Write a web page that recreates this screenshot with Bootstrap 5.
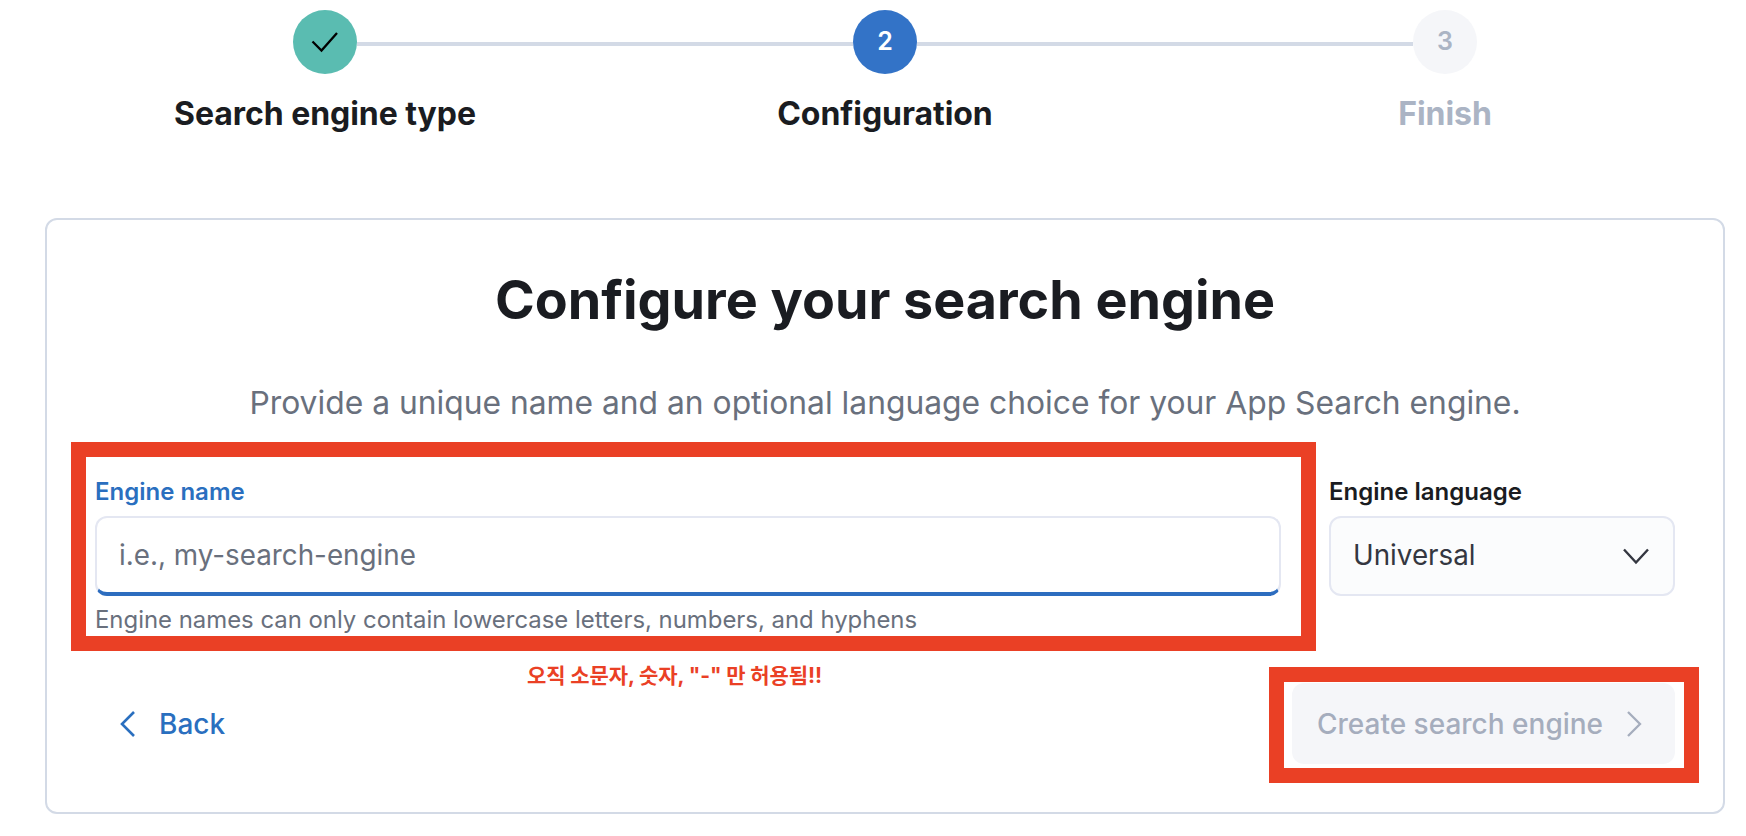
<!DOCTYPE html>
<html lang="en">
<head>
<meta charset="utf-8">
<title>Configure your search engine</title>
<link rel="stylesheet" href="https://cdn.jsdelivr.net/npm/bootstrap@5.3.0/dist/css/bootstrap.min.css">
<style>
html,body{height:100%}
body{background:#fff;font-family:Inter,"Noto Sans CJK KR",sans-serif;color:#1a1c21;overflow:hidden}
.page-wrap{padding:10px 21px 0 45px}
.step-col{width:560px}
.step-line{height:4px;margin-top:4px;background:#d3dae6}
.step-line.blank{background:transparent}
.step-dot{width:64px;height:64px;font-size:25px;font-weight:600}
.dot-done{background:#5abcb1;color:#000}
.dot-now{background:#3373c7;color:#fff}
.dot-todo{background:#f5f6f9;color:#abb4c4}
.step-name{font-size:32px;line-height:40px;font-weight:700;margin-top:20px;letter-spacing:-.05px}
.name-todo{color:#abb4c4}
.main-panel{margin-top:84px;height:596px;border:2px solid #d3dae6;border-radius:12px;padding:0 24px 0 24px}
.panel-title{font-size:53.8px;line-height:68px;font-weight:700;margin:46px 0 0;color:#1a1c21}
.panel-sub{font-size:31.8px;line-height:40px;color:#69707d;margin:49px 0 0;white-space:nowrap}
.name-mark{border:15px solid #ea4025;width:1245px;height:209px;padding:21px 20px 0 9px}
.field-row{margin-top:19px}
.lang-field{width:346px;margin-left:13px;padding-top:36px}
.field-label{font-size:24px;line-height:28px;font-weight:600;margin-bottom:10px;display:block}
.label-on{color:#2a6fbf}
.name-input.form-control,.lang-select.form-select{height:80px;border:2px solid #e4e7f2;border-radius:12px;font-size:27.8px;color:#343741;box-shadow:none}
.name-input.form-control{border-bottom:4px solid #2d6dbf;padding:0 22px;width:1186px}
.name-input::placeholder{color:#69707d;opacity:1}
.lang-select.form-select{background-color:#fbfcfd;padding:0 22px;background-size:30px 30px;background-position:right 22px center;background-image:url("data:image/svg+xml,%3Csvg xmlns='http://www.w3.org/2000/svg' viewBox='0 0 30 30'%3E%3Cpath d='M3 8.500l12 13L27 8.500' fill='none' stroke='%23343741' stroke-width='2.400'/%3E%3C/svg%3E")}
.help-line{font-size:23.9px;line-height:27px;color:#69707d;margin-top:10px;white-space:nowrap}
.note-red{font-size:21px;line-height:24px;font-weight:700;color:#ea4025;margin:13px 0 0 456px;letter-spacing:-.1px}
.action-row{margin-top:-21px}
.back-link{font-size:28px;font-weight:500;color:#2a6fbf;padding:0;margin:0 0 2px 48px;text-decoration:none;border:0;gap:22px}
.back-link:hover{color:#2a6fbf}
.create-mark{border:15px solid #ea4025;width:430px;height:116px;padding:1px 9px 4px 8px}
.create-btn.btn{width:100%;height:81px;background:#f5f6f9;border:0;border-radius:12px;font-size:28px;font-weight:500;color:#a5adbd;padding:0 33px 0 25px;opacity:1}
</style>
</head>
<body>
<div class="page-wrap">
  <div class="d-flex">
    <div class="step-col text-center">
      <div class="d-flex align-items-center">
        <div class="step-line blank flex-grow-1"></div>
        <div class="step-dot dot-done rounded-circle d-flex align-items-center justify-content-center">
          <svg width="32" height="32" viewBox="0 0 32 32"><path d="M3.500 15.500L12.500 24.500L28 7" fill="none" stroke="#000" stroke-width="2.300"/></svg>
        </div>
        <div class="step-line flex-grow-1"></div>
      </div>
      <div class="step-name">Search engine type</div>
    </div>
    <div class="step-col text-center">
      <div class="d-flex align-items-center">
        <div class="step-line flex-grow-1"></div>
        <div class="step-dot dot-now rounded-circle d-flex align-items-center justify-content-center">2</div>
        <div class="step-line flex-grow-1"></div>
      </div>
      <div class="step-name">Configuration</div>
    </div>
    <div class="step-col text-center">
      <div class="d-flex align-items-center">
        <div class="step-line flex-grow-1"></div>
        <div class="step-dot dot-todo rounded-circle d-flex align-items-center justify-content-center">3</div>
        <div class="step-line blank flex-grow-1"></div>
      </div>
      <div class="step-name name-todo">Finish</div>
    </div>
  </div>

  <div class="main-panel">
    <h1 class="panel-title text-center">Configure your search engine</h1>
    <p class="panel-sub text-center">Provide a unique name and an optional language choice for your App Search engine.</p>
    <div class="field-row d-flex align-items-start">
      <div class="name-mark">
        <label class="field-label label-on" for="ename">Engine name</label>
        <input id="ename" class="form-control name-input" type="text" placeholder="i.e., my-search-engine">
        <div class="help-line">Engine names can only contain lowercase letters, numbers, and hyphens</div>
      </div>
      <div class="lang-field">
        <label class="field-label" for="elang">Engine language</label>
        <select id="elang" class="form-select lang-select"><option>Universal</option></select>
      </div>
    </div>
    <div class="note-red">오직 소문자, 숫자, "-" 만 허용됨!!</div>
    <div class="action-row d-flex justify-content-between align-items-center">
      <a href="#" class="back-link d-flex align-items-center">
        <svg width="18" height="26" viewBox="0 0 18 26"><path d="M15 1L3 13l12 12" fill="none" stroke="#2a6fbf" stroke-width="2.600"/></svg>
        Back
      </a>
      <div class="create-mark">
        <button type="button" class="btn create-btn d-flex align-items-center justify-content-between" disabled>
          Create search engine
          <svg width="16" height="26" viewBox="0 0 16 26"><path d="M2 1l12 12L2 25" fill="none" stroke="#a5adbd" stroke-width="2.300"/></svg>
        </button>
      </div>
    </div>
  </div>
</div>
<script src="https://cdn.jsdelivr.net/npm/bootstrap@5.3.0/dist/js/bootstrap.bundle.min.js"></script>
</body>
</html>
